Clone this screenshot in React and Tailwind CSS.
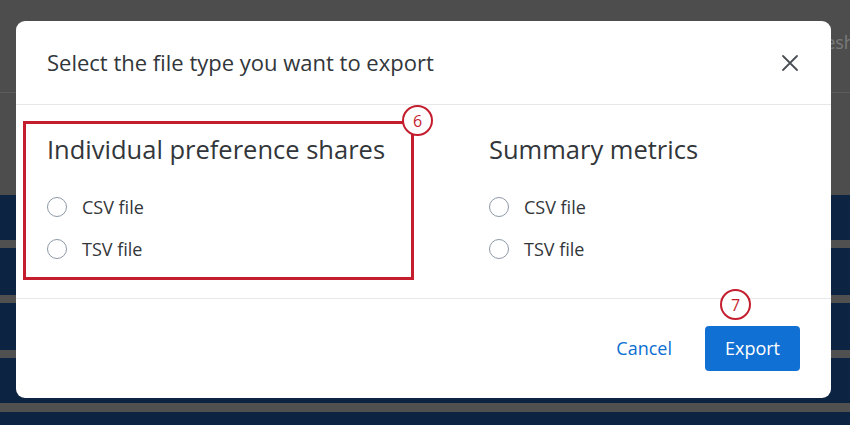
import React from 'react';

const font = { fontFamily: '"Open Sans", "Noto Sans", sans-serif' };

const Radio = ({ label }) => (
  <label className="flex items-center h-[42px] cursor-pointer">
    <span className="w-5 h-5 rounded-full border-[1.5px] border-[#8d99a6] bg-white shrink-0" />
    <span className="ml-[15px] text-[18px] text-[#32363a]">{label}</span>
  </label>
);

const Step = ({ n, className }) => (
  <div
    className={`absolute w-[31px] h-[31px] rounded-full border-2 border-[#c41e2e] bg-white flex items-center justify-center text-[16px] font-medium text-[#c41e2e] ${className}`}
  >
    {n}
  </div>
);

const Column = ({ title }) => (
  <div>
    <h3 className="text-[25.5px] leading-[36px] text-[#32363a]">{title}</h3>
    <div className="mt-[19px]">
      <Radio label="CSV file" />
      <Radio label="TSV file" />
    </div>
  </div>
);

export default function App() {
  return (
    <div className="relative w-[850px] h-[425px] overflow-hidden bg-[#4d4d4d]" style={font}>
      {/* dimmed page behind the dialog */}
      <div className="h-[92px] flex justify-end items-start pt-[29px] -mr-[26px]">
        <span className="text-[18px] text-[#7a7a7a] whitespace-nowrap">Last refreshed</span>
      </div>
      <div className="h-px bg-[#5c5c5c]" />
      <div className="h-[102px]" />
      <div className="flex flex-col">
        <div className="h-[45px] bg-[#0c2441]" />
        <div className="h-[8px] bg-[#505050]" />
        <div className="h-[47px] bg-[#0c2441]" />
        <div className="h-[8px] bg-[#505050]" />
        <div className="h-[47px] bg-[#0c2441]" />
        <div className="h-[8px] bg-[#505050]" />
        <div className="h-[45px] bg-[#0c2441]" />
        <div className="h-[9px] bg-[#505050]" />
        <div className="h-[20px] bg-[#0c2441]" />
      </div>

      {/* export dialog */}
      <div className="absolute left-[16px] top-[21px] w-[815px] h-[377px] bg-white rounded-[9px] flex flex-col">
        <div className="h-[84px] flex items-center justify-between pl-[31px] pr-[32px] border-b border-[#e6e7e8]">
          <h2 className="text-[22px] text-[#32363a]">Select the file type you want to export</h2>
          <svg width="18" height="18" viewBox="0 0 18 18" className="text-[#4a4f55]">
            <path d="M2 2 L16 16 M16 2 L2 16" stroke="currentColor" strokeWidth="1.8" strokeLinecap="round" />
          </svg>
        </div>

        <div className="h-[194px] flex pl-[31px] pt-[26px] border-b border-[#e6e7e8]">
          <div className="w-[442px]">
            <Column title="Individual preference shares" />
          </div>
          <Column title="Summary metrics" />
        </div>

        <div className="flex-1 flex items-center justify-end gap-[33px] pr-[31px]">
          <button className="text-[18px] text-[#0b6ed1]">Cancel</button>
          <button className="w-[95px] h-[45px] rounded-[4px] bg-[#1170d3] text-white text-[18px]">
            Export
          </button>
        </div>
      </div>

      {/* callouts */}
      <div className="absolute left-[23px] top-[121px] w-[391px] h-[159px] border-[3px] border-[#c41e2e]" />
      <Step n="6" className="left-[402px] top-[105px]" />
      <Step n="7" className="left-[720px] top-[289px]" />
    </div>
  );
}
